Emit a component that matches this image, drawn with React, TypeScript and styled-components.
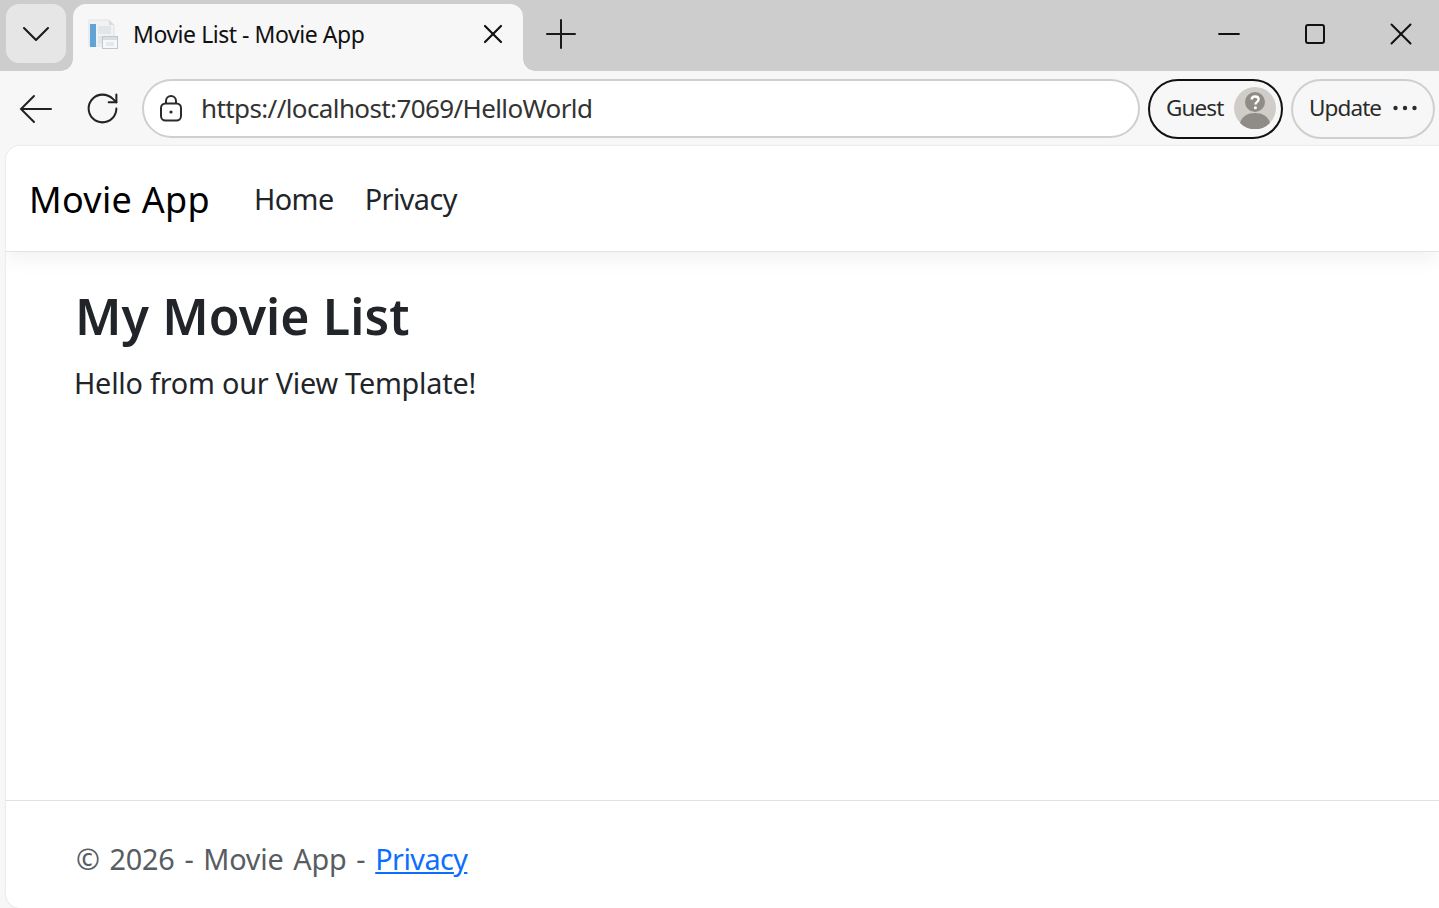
import React from 'react';
import styled, { createGlobalStyle } from 'styled-components';
import { ChevronDown, X, Plus, Minus, Square, RotateCw } from 'lucide-react';

const GlobalStyle = createGlobalStyle`
  html, body {
    margin: 0;
    padding: 0;
    height: 100%;
    overflow: hidden;
    background: #f7f7f7;
    font-family: 'Noto Sans', 'Open Sans', sans-serif;
  }
`;

const Window = styled.div`
  width: 1439px;
  height: 908px;
  display: flex;
  flex-direction: column;
  background: #f7f7f7;
  overflow: hidden;
`;

const TabStrip = styled.div`
  height: 71px;
  flex: none;
  display: flex;
  align-items: flex-start;
  background: #cdcdcd;
  padding: 4px 0 0 6px;
  box-sizing: border-box;
`;

const TabSearch = styled.div`
  width: 60px;
  height: 59px;
  flex: none;
  display: flex;
  align-items: center;
  justify-content: center;
  background: #e6e6e6;
  border-radius: 13px;
  color: #1a1a1a;
`;

const Tab = styled.div`
  position: relative;
  width: 450px;
  height: 67px;
  flex: none;
  margin-left: 7px;
  padding: 0 14px 7px 14px;
  box-sizing: border-box;
  display: flex;
  align-items: center;
  background: #f7f7f7;
  border-radius: 13px 13px 0 0;

  &::before,
  &::after {
    content: '';
    position: absolute;
    bottom: 0;
    width: 12px;
    height: 12px;
  }
  &::before {
    right: 100%;
    background: radial-gradient(circle at 0 0, transparent 11.5px, #f7f7f7 12px);
  }
  &::after {
    left: 100%;
    background: radial-gradient(circle at 100% 0, transparent 11.5px, #f7f7f7 12px);
  }
`;

const TabTitle = styled.span`
  flex: 1;
  margin-left: 14px;
  font-size: 23px;
  letter-spacing: -0.46px;
  color: #111;
  white-space: nowrap;
`;

const NewTab = styled.div`
  margin-left: 14px;
  margin-top: 6px;
  display: flex;
  color: #1a1a1a;
`;

const WindowControls = styled.div`
  margin-left: auto;
  margin-top: 11px;
  display: flex;
  align-items: center;
  gap: 26px;
  padding-right: 8px;
  color: #111;
`;

const ControlSlot = styled.div`
  width: 60px;
  height: 38px;
  display: flex;
  align-items: center;
  justify-content: center;
`;

const Toolbar = styled.div`
  height: 75px;
  flex: none;
  display: flex;
  align-items: center;
  padding: 0 4px 0 19px;
  box-sizing: border-box;
  background: #f7f7f7;
`;

const NavIcons = styled.div`
  width: 123px;
  flex: none;
  display: flex;
  align-items: center;
  gap: 31px;
  color: #222;
`;

const AddressBar = styled.div`
  width: 998px;
  height: 59px;
  flex: none;
  box-sizing: border-box;
  display: flex;
  align-items: center;
  gap: 17px;
  padding: 0 0 2px 14px;
  background: #fff;
  border: 2px solid #cfcfcf;
  border-radius: 30px;
`;

const Url = styled.span`
  font-size: 26px;
  letter-spacing: -0.61px;
  color: #333;
  white-space: nowrap;
`;

const Pill = styled.div<{ $active?: boolean }>`
  height: 60px;
  box-sizing: border-box;
  flex: none;
  display: flex;
  align-items: center;
  border-radius: 30px;
  border: 2px solid ${(p) => (p.$active ? '#111' : '#cfcfcf')};
  color: #2b2b2b;
  font-size: 22.5px;
  letter-spacing: -0.9px;
`;

const GuestPill = styled(Pill)`
  width: 135px;
  margin-left: 8px;
  padding: 0 5px 2px 16px;
  justify-content: space-between;
`;

const UpdatePill = styled(Pill)`
  width: 144px;
  margin-left: 8px;
  padding: 0 16px 2px 16px;
  justify-content: space-between;
`;

const Page = styled.div`
  flex: 1;
  margin-left: 6px;
  display: flex;
  flex-direction: column;
  background: #fff;
  border-radius: 14px 0 0 14px;
  box-shadow: 0 0 2px rgba(0, 0, 0, 0.16);
  overflow: hidden;
`;

const Navbar = styled.nav`
  height: 106px;
  flex: none;
  box-sizing: border-box;
  display: flex;
  align-items: center;
  padding-left: 23px;
  background: #fff;
  border-bottom: 1px solid #e3e3e3;
  box-shadow: 0 4px 22px rgba(0, 0, 0, 0.07);
`;

const Brand = styled.a`
  padding-top: 2px;
  font-size: 36px;
  letter-spacing: 0.3px;
  color: #000;
  margin-right: 44px;
`;

const NavLink = styled.a`
  font-size: 28.8px;
  letter-spacing: -0.55px;
  color: #212529;
  margin-right: 31px;
`;

const Main = styled.main`
  flex: 1;
  padding: 26px 0 0 69px;
  color: #212529;
`;

const Heading = styled.h1`
  margin: 0;
  font-size: 50px;
  line-height: 76px;
  font-weight: 600;
  letter-spacing: 0.1px;
`;

const Lead = styled.p`
  margin: 7px 0 0 -1px;
  font-size: 28.8px;
  line-height: 44px;
  letter-spacing: -0.22px;
`;

const Footer = styled.footer`
  height: 108px;
  flex: none;
  box-sizing: border-box;
  padding: 36px 0 0 70px;
  border-top: 1px solid #dee2e6;
  font-size: 28.8px;
  line-height: 44px;
  letter-spacing: -0.2px;
  word-spacing: 2.5px;
  color: #585d62;
`;

const FooterLink = styled.a`
  color: #0d6efd;
  text-decoration: underline;
  letter-spacing: -0.55px;
`;

const Favicon = () => (
  <svg width="32" height="32" viewBox="0 0 32 32" style={{ flex: 'none' }}>
    <path d="M2 2h20l5 5v21H2z" fill="#f0f2f4" stroke="#dfe2e5" />
    <path d="M22 2v5h5z" fill="#d8dce0" />
    <rect x="3" y="6" width="6" height="23" fill="#62a3d6" />
    <rect x="11" y="8" width="13" height="8" fill="#e3e6e9" />
    <rect x="11" y="18" width="5" height="8" fill="#e3e6e9" />
    <rect x="15.500" y="18.500" width="15" height="12" fill="#f6f7f8" stroke="#c2c7cc" />
    <rect x="16" y="19" width="14" height="3" fill="#d9dde1" />
    <rect x="19" y="24" width="8" height="4" fill="#e6e8eb" />
  </svg>
);

const BackArrow = () => (
  <svg width="34" height="30" viewBox="0 0 34 30" fill="none" stroke="currentColor" strokeWidth="2" strokeLinecap="round" style={{ flex: 'none' }}>
    <path d="M2 15h30M15 2 2 15l13 13" />
  </svg>
);

const LockIcon = () => (
  <svg width="26" height="28" viewBox="0 0 26 28" fill="none" stroke="#2b2b2b" strokeWidth="2" style={{ flex: 'none' }}>
    <rect x="3" y="9.5" width="20" height="17" rx="4.5" />
    <path d="M8 9.5V7a5 5 0 0 1 10 0v2.5" />
    <circle cx="13" cy="18" r="1.6" fill="#2b2b2b" stroke="none" />
  </svg>
);

const GuestAvatar = () => (
  <svg width="42" height="42" viewBox="0 0 42 42">
    <circle cx="21" cy="21" r="21" fill="#d0ccc7" />
    <path d="M6 36c2-7 8-10 15-10s13 3 15 10a21 21 0 0 1-30 0z" fill="#8f8b87" />
    <circle cx="21" cy="15" r="10" fill="#8f8b87" />
    <path d="M17.5 12.5c.3-2 1.700-3 3.600-3 2.100 0 3.500 1.200 3.500 3 0 2.600-3.200 2.700-3.200 5" fill="none" stroke="#fff" strokeWidth="2.300" />
    <circle cx="21.400" cy="20.800" r="1.500" fill="#fff" />
  </svg>
);

const MoreDots = () => (
  <svg width="24" height="6" viewBox="0 0 24 6" fill="#2b2b2b">
    <circle cx="2.500" cy="3" r="2.200" />
    <circle cx="12" cy="3" r="2.200" />
    <circle cx="21.500" cy="3" r="2.200" />
  </svg>
);

const App = () => (
  <Window>
    <GlobalStyle />
    <TabStrip>
      <TabSearch>
        <ChevronDown size={48} strokeWidth={1.05} />
      </TabSearch>
      <Tab>
        <Favicon />
        <TabTitle>Movie List - Movie App</TabTitle>
        <X size={32} strokeWidth={1.6} color="#111" />
      </Tab>
      <NewTab>
        <Plus size={48} strokeWidth={1} />
      </NewTab>
      <WindowControls>
        <ControlSlot>
          <Minus size={34} strokeWidth={1.4} />
        </ControlSlot>
        <ControlSlot>
          <Square size={24} strokeWidth={2} />
        </ControlSlot>
        <ControlSlot>
          <X size={38} strokeWidth={1.25} />
        </ControlSlot>
      </WindowControls>
    </TabStrip>
    <Toolbar>
      <NavIcons>
        <BackArrow />
        <RotateCw size={37} strokeWidth={1.3} />
      </NavIcons>
      <AddressBar>
        <LockIcon />
        <Url>https://localhost:7069/HelloWorld</Url>
      </AddressBar>
      <GuestPill $active>
        Guest
        <GuestAvatar />
      </GuestPill>
      <UpdatePill>
        Update
        <MoreDots />
      </UpdatePill>
    </Toolbar>
    <Page>
      <Navbar>
        <Brand>Movie App</Brand>
        <NavLink>Home</NavLink>
        <NavLink>Privacy</NavLink>
      </Navbar>
      <Main>
        <Heading>My Movie List</Heading>
        <Lead>Hello from our View Template!</Lead>
      </Main>
      <Footer>
        © 2026 - Movie App - <FooterLink>Privacy</FooterLink>
      </Footer>
    </Page>
  </Window>
);

export default App;
